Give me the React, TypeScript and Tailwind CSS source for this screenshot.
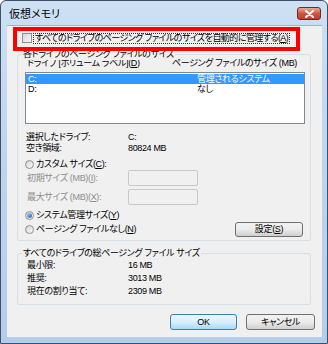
import React from "react";

const font =
  "[font-family:'Liberation_Sans','Noto_Sans_CJK_JP',sans-serif] [font-feature-settings:'palt']";

function Radio({ checked = false }: { checked?: boolean }) {
  return (
    <span className="w-[9px] h-[9px] rounded-full border border-[#8e8f8f] bg-gradient-to-br from-[#d4d4d4] to-[#fbfbfb] flex items-center justify-center shrink-0">
      {checked && (
        <span className="w-[5px] h-[5px] rounded-full bg-gradient-to-br from-[#9fd3ff] to-[#1a5fb4]" />
      )}
    </span>
  );
}

function Btn({
  children,
  primary = false,
  w = "w-[68px]",
}: {
  children: React.ReactNode;
  primary?: boolean;
  w?: string;
}) {
  return (
    <div
      className={`${w} h-full rounded-[3px] border flex items-center justify-center ${
        primary
          ? "border-[#3c7fb1] bg-gradient-to-b from-[#eaf6fd] via-[#d9f0fc] to-[#a7d9f5]"
          : "border-[#707070] bg-gradient-to-b from-[#f2f2f2] via-[#ebebeb] to-[#cfcfcf]"
      }`}
    >
      {children}
    </div>
  );
}

export default function App() {
  return (
    <div
      className={`${font} w-[328px] h-[344px] bg-gradient-to-b from-[#cde0f4] via-[#bcd4ee] to-[#b4cdea] border border-[#3e5166] rounded-t-[6px] flex flex-col text-[9px] tracking-[-0.35px] text-black leading-none overflow-hidden`}
    >
      {/* Title bar */}
      <div className="h-[24px] flex items-start justify-between pl-[8px] pr-[6px]">
        <span className="mt-[8px] text-[11px] leading-[11px] tracking-normal">仮想メモリ</span>
        <div className="mt-[6px] w-[24px] h-[13px] rounded-[3px] border border-[#6d2a20] bg-gradient-to-b from-[#e9a99b] via-[#d0553e] to-[#c2402a] flex items-center justify-center">
          <svg width="9" height="8" viewBox="0 0 9 8">
            <path d="M1 1 L8 7 M8 1 L1 7" stroke="#fff" strokeWidth="2" strokeLinecap="round" />
          </svg>
        </div>
      </div>

      {/* Client area */}
      <div className="relative ml-[6px] w-[315px] h-[312px] bg-[#f0f0f0] border-t border-[#9fb2c8] flex flex-col">
        {/* Auto manage checkbox */}
        <div className="mt-[6px] ml-[15px] h-[12px] flex items-center gap-[1px]">
          <span className="w-[10px] h-[10px] border border-[#8e8f8f] bg-gradient-to-br from-[#d6d6d6] to-[#f7f7f7]" />
          <span className="border border-dotted border-[#333] px-[1px] h-[11px] flex items-center whitespace-nowrap tracking-[-0.55px]">
            すべてのドライブのページング ファイルのサイズを自動的に管理する(
            <span className="underline">A</span>)
          </span>
        </div>

        {/* Group: per drive */}
        <div className="relative mt-[10px] ml-[10px] w-[294px] h-[187px] border border-[#d5dfe5] rounded-[3px] flex flex-col">
          <span className="absolute -top-[6px] left-[4px] bg-[#f0f0f0] px-[1px] leading-[11px]">
            各ドライブのページング ファイルのサイズ
          </span>
          <div className="mt-[2px] ml-[9px] h-[12px] flex items-center">
            <span className="w-[145px]">
              ドライブ [ボリューム ラベル](<span className="underline">D</span>)
            </span>
            <span>ページング ファイルのサイズ (MB)</span>
          </div>
          <div className="mt-[3px] ml-[7px] w-[280px] h-[52px] border border-[#828790] bg-white pt-[1px] flex flex-col">
            <div className="h-[10px] bg-[#3399ff] text-white flex items-center pl-[2px]">
              <span className="w-[169px]">C:</span>
              <span>管理されるシステム</span>
            </div>
            <div className="h-[10px] flex items-center pl-[2px]">
              <span className="w-[169px]">D:</span>
              <span>なし</span>
            </div>
          </div>
          <div className="mt-[8px] ml-[8px] flex flex-col">
            <div className="h-[11px] flex items-center">
              <span className="w-[102px]">選択したドライブ:</span>
              <span>C:</span>
            </div>
            <div className="h-[11px] flex items-center">
              <span className="w-[102px]">空き領域:</span>
              <span>80824 MB</span>
            </div>
          </div>
          <div className="mt-[4px] ml-[7px] h-[12px] flex items-center gap-[2px]">
            <Radio />
            <span>
              カスタム サイズ(<span className="underline">C</span>):
            </span>
          </div>
          <div className="ml-[9px] h-[16px] flex items-center text-[#8d8d8d]">
            <span className="w-[101px]">
              初期サイズ (MB)(<span className="underline">I</span>):
            </span>
            <span className="w-[70px] h-full border border-[#c8c8c8] rounded-[2px] bg-[#f0f0f0]" />
          </div>
          <div className="mt-[3px] ml-[9px] h-[16px] flex items-center text-[#8d8d8d]">
            <span className="w-[101px]">
              最大サイズ (MB)(<span className="underline">X</span>):
            </span>
            <span className="w-[70px] h-full border border-[#c8c8c8] rounded-[2px] bg-[#f0f0f0]" />
          </div>
          <div className="mt-[4px] ml-[7px] h-[12px] flex items-center gap-[2px]">
            <Radio checked />
            <span>
              システム管理サイズ(<span className="underline">Y</span>)
            </span>
          </div>
          <div className="mt-[1px] ml-[7px] mr-[7px] h-[15px] flex items-center gap-[2px]">
            <Radio />
            <span>
              ページング ファイルなし(<span className="underline">N</span>)
            </span>
            <div className="ml-auto h-full">
              <Btn>
                設定(<span className="underline">S</span>)
              </Btn>
            </div>
          </div>
        </div>

        {/* Group: totals */}
        <div className="relative mt-[12px] ml-[10px] w-[294px] h-[52px] border border-[#d5dfe5] rounded-[3px] pt-[5px] pl-[9px] flex flex-col">
          <span className="absolute -top-[6px] left-[4px] bg-[#f0f0f0] px-[1px] leading-[11px]">
            すべてのドライブの総ページング ファイル サイズ
          </span>
          <div className="h-[13px] flex items-center">
            <span className="w-[101px]">最小限:</span>
            <span>16 MB</span>
          </div>
          <div className="h-[13px] flex items-center">
            <span className="w-[101px]">推奨:</span>
            <span>3013 MB</span>
          </div>
          <div className="h-[13px] flex items-center">
            <span className="w-[101px]">現在の割り当て:</span>
            <span>2309 MB</span>
          </div>
        </div>

        {/* Buttons */}
        <div className="mt-[9px] mr-[7px] h-[16px] flex justify-end gap-[9px]">
          <Btn primary w="w-[67px]">OK</Btn>
          <Btn w="w-[69px]">キャンセル</Btn>
        </div>

        {/* Red highlight annotation */}
        <div className="absolute left-[6px] top-[1px] w-[287px] h-[24px] border-4 border-[#ff0000] pointer-events-none" />
      </div>
    </div>
  );
}
